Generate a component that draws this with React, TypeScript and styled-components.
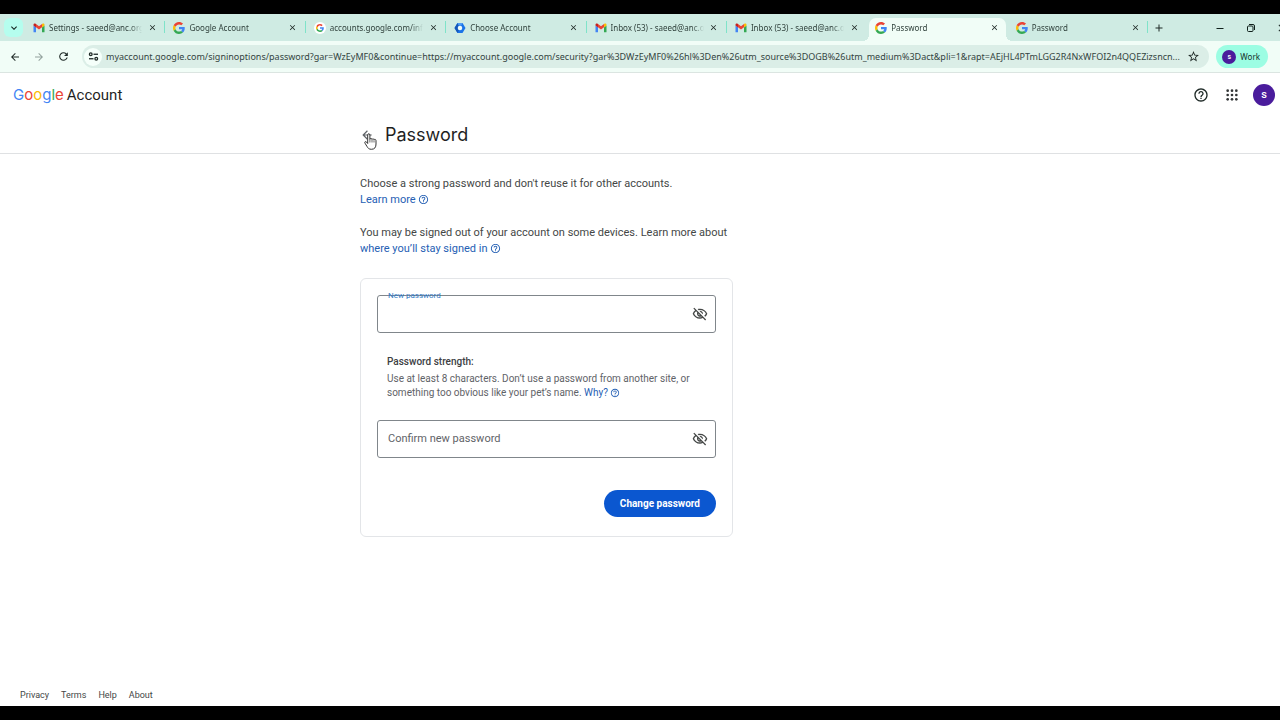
import React from "react";
import styled, { createGlobalStyle, css } from "styled-components";
import {
  MdAdd,
  MdArrowBack,
  MdArrowForward,
  MdClose,
  MdHelpOutline,
  MdKeyboardArrowDown,
  MdOutlineVisibilityOff,
  MdRefresh,
  MdStarBorder,
} from "react-icons/md";

const GlobalStyle = createGlobalStyle`
  *, *::before, *::after { box-sizing: border-box; }
  body {
    margin: 0;
    background: #000;
    font-family: Roboto, "Liberation Sans", sans-serif;
    color: #1f1f1f;
  }
  h1, h2, p { margin: 0; padding: 0; }
  button, input { font: inherit; color: inherit; }
`;

const Screen = styled.div`
  display: flex;
  flex-direction: column;
  min-height: 100vh;
  padding: 14px 0;
  overflow: hidden;
`;

const IconButton = styled.button<{ $size: number; $color?: string }>`
  display: flex;
  flex: none;
  align-items: center;
  justify-content: center;
  width: ${(p) => p.$size}px;
  height: ${(p) => p.$size}px;
  padding: 0;
  border: 0;
  border-radius: 50%;
  background: none;
  color: ${(p) => p.$color ?? "#1f2a27"};
  cursor: pointer;
`;

/* Browser tab strip */

const TabStrip = styled.header`
  display: flex;
  align-items: center;
  height: 27px;
  padding-left: 4px;
  overflow: hidden;
  background: #cfebe3;
  font-family: "Noto Sans", "Open Sans", sans-serif;
`;

const TabSearch = styled.button`
  display: flex;
  flex: none;
  align-items: center;
  justify-content: center;
  width: 19px;
  height: 19px;
  padding: 0;
  border: 0;
  border-radius: 6px;
  background: #b5fdee;
  color: #10201c;
`;

const TabList = styled.div`
  display: flex;
  flex: 0 1 1125px;
  align-self: stretch;
  min-width: 0;
  margin-right: 1px;
  padding: 4px 0 0 2px;
`;

const activeTab = css`
  background: #f1fdf7;
  &::before,
  &::after {
    content: "";
    position: absolute;
    bottom: 0;
    width: 6px;
    height: 6px;
  }
  &::before {
    right: 100%;
    background: radial-gradient(circle at 0 0, transparent 6px, #f1fdf7 6px);
  }
  &::after {
    left: 100%;
    background: radial-gradient(circle at 100% 0, transparent 6px, #f1fdf7 6px);
  }
`;

const TabSlot = styled.div<{ $divider: boolean }>`
  display: flex;
  flex: 1 1 0;
  min-width: 0;
  padding: 0 1px 0 2px;
  border-right: 1px solid transparent;
  border-image: ${(p) =>
    p.$divider
      ? "linear-gradient(transparent 4px, #7fe3c9 4px, #7fe3c9 15px, transparent 15px) 1"
      : "none"};
`;

const Tab = styled.div<{ $active: boolean }>`
  position: relative;
  display: flex;
  flex: 1;
  align-items: center;
  gap: 4px;
  min-width: 0;
  padding: 0 5px 4px 6px;
  border-radius: 7px 7px 0 0;
  ${(p) => p.$active && activeTab}
`;

const TabTitle = styled.span`
  flex: 1;
  min-width: 0;
  overflow: hidden;
  white-space: nowrap;
  font-size: 8px;
  line-height: 12px;
  color: #2f403b;
  mask-image: linear-gradient(to right, #000 calc(100% - 12px), transparent);
`;

const WindowControls = styled.div`
  display: flex;
  flex: none;
  gap: 15px;
  margin: 0 -10px 0 auto;
`;

/* Browser toolbar */

const Toolbar = styled.div`
  display: flex;
  align-items: center;
  height: 32px;
  padding: 0 12px 0 7px;
  border-bottom: 1px solid #dbe5e1;
  background: #f1fdf7;
  font-family: "Noto Sans", "Open Sans", sans-serif;
`;

const NavButtons = styled.nav`
  display: flex;
  gap: 8px;
  margin-right: 11px;
`;

const AddressBar = styled.div`
  display: flex;
  flex: 1;
  align-items: center;
  gap: 4px;
  min-width: 0;
  height: 23px;
  margin-right: 7px;
  padding: 0 7px 0 2px;
  border-radius: 12px;
  background: #dbeee7;
`;

const SiteInfo = styled(IconButton)`
  background: #f5fffa;
`;

const UrlInput = styled.input`
  flex: 1;
  min-width: 0;
  padding: 0;
  border: 0;
  outline: 0;
  background: none;
  font-size: 9px;
  line-height: 16px;
  color: #33443f;
  text-overflow: ellipsis;
`;

const ProfileChip = styled.button`
  display: flex;
  align-items: center;
  gap: 4px;
  height: 23px;
  padding: 0 8px 0 6px;
  border: 0;
  border-radius: 12px;
  background: #9cfde3;
  font-size: 8px;
  color: #14312a;
`;

const Avatar = styled.span<{ $size: number }>`
  display: flex;
  align-items: center;
  justify-content: center;
  width: ${(p) => p.$size}px;
  height: ${(p) => p.$size}px;
  border-radius: 50%;
  background: #4a1c9c;
  color: #fff;
  font-family: Roboto, sans-serif;
  font-size: ${(p) => (p.$size > 16 ? 11 : 7)}px;
  font-weight: 500;
`;

/* Account page */

const Page = styled.div`
  display: flex;
  flex: 1;
  flex-direction: column;
  background: #fff;
`;

const AccountBar = styled.header`
  display: flex;
  align-items: center;
  justify-content: space-between;
  height: 43px;
  padding: 0 5px 0 13px;
`;

const Brand = styled.a`
  display: flex;
  gap: 3px;
  font-size: 15px;
  line-height: 20px;
  color: #1f1f1f;
  text-decoration: none;
`;

const BrandName = styled.span`
  font-family: Inter, sans-serif;
`;

const BrandLetter = styled.span<{ $color: string }>`
  color: ${(p) => p.$color};
`;

const BarActions = styled.div`
  display: flex;
  align-items: center;
  gap: 11px;
`;

const TitleBar = styled.div`
  display: flex;
  height: 38px;
  border-bottom: 1px solid #dfe1e3;
`;

const Column = styled.div`
  width: 100%;
  max-width: 560px;
  margin: 0 auto;
`;

const TitleRow = styled(Column)`
  display: flex;
  align-items: center;
  gap: 11px;
`;

const BackHolder = styled.div`
  position: relative;
`;

const Pointer = styled.svg`
  position: absolute;
  top: 5px;
  left: 4px;
  width: 13px;
  height: 17px;
`;

const Title = styled.h1`
  font-family: Inter, sans-serif;
  font-size: 18px;
  font-weight: 400;
  line-height: 24px;
`;

const Content = styled(Column)`
  flex: 1;
  padding-top: 22px;
`;

const Narrow = styled.div`
  max-width: 373px;
`;

const Paragraph = styled.p`
  margin-bottom: 17px;
  font-size: 11px;
  line-height: 16px;
  color: #444746;
`;

const HelpLink = styled.a`
  color: #2560b4;
  text-decoration: none;
  svg {
    margin-left: 2px;
    vertical-align: -2px;
  }
`;

const Card = styled.form`
  margin-top: 21px;
  padding: 16px 16px 19px;
  border: 1px solid #e3e5e8;
  border-radius: 6px;
`;

const Field = styled.div`
  position: relative;
  display: flex;
  align-items: center;
  height: 38px;
  padding: 0 5px 0 10px;
  border: 1px solid #80868b;
  border-radius: 3px;
`;

const FloatingLabel = styled.label`
  position: absolute;
  top: -5px;
  left: 10px;
  font-size: 8px;
  line-height: 10px;
  color: #2f78c4;
`;

const FieldInput = styled.input`
  flex: 1;
  min-width: 0;
  padding: 0;
  border: 0;
  outline: 0;
  background: none;
  font-size: 11px;
  line-height: 16px;
  &::placeholder {
    color: #5f6368;
    opacity: 1;
  }
`;

const Strength = styled.section`
  padding: 22px 10px 20px;
  font-size: 10px;
  line-height: 14px;
  color: #5f6368;
`;

const StrengthTitle = styled.h2`
  margin-bottom: 3px;
  font-size: 10px;
  font-weight: 500;
  line-height: 14px;
  color: #3c4043;
`;

const Actions = styled.div`
  display: flex;
  justify-content: flex-end;
  margin-top: 32px;
`;

const SubmitButton = styled.button`
  height: 27px;
  padding: 0 16px;
  border: 0;
  border-radius: 14px;
  background: #0b57d0;
  font-size: 10px;
  font-weight: 700;
  color: #fff;
`;

const Footer = styled.footer`
  display: flex;
  gap: 12px;
  padding: 0 20px 5px;
`;

const FooterLink = styled.a`
  font-size: 9px;
  line-height: 12px;
  color: #444746;
  text-decoration: none;
`;

const GoogleMark = () => (
  <svg width="12" height="12" viewBox="0 0 48 48" aria-hidden="true">
    <path fill="#EA4335" d="M24 9.5c3.54 0 6.71 1.22 9.21 3.6l6.85-6.85C35.9 2.38 30.47 0 24 0 14.62 0 6.51 5.38 2.56 13.22l7.98 6.19C12.43 13.72 17.74 9.5 24 9.5z" />
    <path fill="#4285F4" d="M46.98 24.55c0-1.57-.15-3.09-.38-4.55H24v9.02h12.94c-.58 2.96-2.26 5.48-4.78 7.18l7.73 6c4.51-4.18 7.09-10.36 7.09-17.65z" />
    <path fill="#FBBC05" d="M10.53 28.59c-.48-1.45-.76-2.99-.76-4.59s.27-3.14.76-4.59l-7.98-6.19C.92 16.46 0 20.12 0 24c0 3.88.92 7.54 2.56 10.78l7.97-6.19z" />
    <path fill="#34A853" d="M24 48c6.48 0 11.93-2.13 15.89-5.81l-7.73-6c-2.15 1.45-4.92 2.3-8.16 2.3-6.26 0-11.57-4.22-13.47-9.91l-7.98 6.19C6.51 42.62 14.62 48 24 48z" />
  </svg>
);

const BadgeDisc = styled.span`
  display: flex;
  align-items: center;
  justify-content: center;
  width: 12px;
  height: 12px;
  border-radius: 50%;
  background: #fff;
  svg {
    width: 8px;
    height: 8px;
  }
`;

const GmailMark = () => (
  <svg width="12" height="12" viewBox="0 0 24 24" aria-hidden="true">
    <path fill="#4285F4" d="M1.500 20.500H6v-10L1 6.800V20a.5.5 0 0 0 .5.5z" />
    <path fill="#34A853" d="M18 20.500h4.500a.5.5 0 0 0 .5-.5V6.800l-5 3.700z" />
    <path fill="#EA4335" d="M6 10.500V4.200l6 4.500 6-4.500v6.300L12 15z" />
    <path fill="#C5221F" d="M1 7.200V5.500C1 3.300 3.600 2.300 5.300 3.700L6 4.200v6.700z" />
    <path fill="#FBBC04" d="M18 4.200l.7-.5C20.400 2.300 23 3.300 23 5.500v1.700l-5 3.700z" />
  </svg>
);

const AdminMark = () => (
  <svg width="12" height="12" viewBox="0 0 24 24" aria-hidden="true">
    <path fill="#1a73e8" d="M7 2h10l6 10-6 10H7L1 12z" />
    <path fill="#1557b8" d="M7 2l-6 10 6 10 2.500-5L7 12l2.500-5z" />
    <path fill="#4c9bf5" d="M7 2h10l-2.500 5h-5z" />
    <circle cx="12" cy="12" r="4.500" fill="#eefaf6" />
  </svg>
);

const TuneMark = () => (
  <svg width="11" height="11" viewBox="0 0 22 22" fill="none" stroke="#1f2a27" strokeWidth="2.600" aria-hidden="true">
    <circle cx="5.500" cy="6.500" r="2.700" />
    <path d="M11 6.500h9" />
    <circle cx="16.500" cy="15.500" r="2.700" />
    <path d="M2 15.500h9" />
  </svg>
);

const RestoreMark = () => (
  <svg width="8" height="8" viewBox="0 0 8 8" fill="none" stroke="#10201c" aria-hidden="true">
    <rect x="0.500" y="2" width="5.500" height="5.500" rx="1" />
    <path d="M2 .5h4a1.500 1.500 0 0 1 1.500 1.500v4" />
  </svg>
);

const MinimiseMark = () => (
  <svg width="8" height="8" viewBox="0 0 8 8" stroke="#10201c" aria-hidden="true">
    <path d="M0.500 4.500h7" />
  </svg>
);

const AppsMark = () => (
  <svg width="16" height="16" viewBox="0 0 24 24" fill="#333637" aria-hidden="true">
    {[5.5, 12, 18.5].map((y) =>
      [5.5, 12, 18.5].map((x) => <circle key={`${x}-${y}`} cx={x} cy={y} r="2" />)
    )}
  </svg>
);

const HandPointer = () => (
  <Pointer viewBox="0 0 13 17" aria-hidden="true">
    <path
      fill="#fff"
      stroke="#333"
      strokeLinejoin="round"
      d="M3.700 10.500V2c0-1.700 2.200-1.700 2.200 0v4.300c.2-1.200 2-1.100 2.100.1.300-.9 1.900-.8 2 .4.400-.8 2-.6 2 .8v3.400c0 3.300-1.300 5.300-4.600 5.300-2.600 0-3.400-1.200-4.500-3L1 10.200c-.8-1.300.6-2.200 1.500-1.200z"
    />
    <path stroke="#444" strokeWidth=".8" d="M5.900 6.300V9.500M8 6.800v2.700M10 7.200v2.300" />
  </Pointer>
);

const icons = {
  gmail: <GmailMark />,
  google: <GoogleMark />,
  badge: (
    <BadgeDisc>
      <GoogleMark />
    </BadgeDisc>
  ),
  admin: <AdminMark />,
};

const tabs: { icon: keyof typeof icons; title: string; active?: boolean }[] = [
  { icon: "gmail", title: "Settings - saeed@anc.org" },
  { icon: "google", title: "Google Account" },
  { icon: "badge", title: "accounts.google.com/info" },
  { icon: "admin", title: "Choose Account" },
  { icon: "gmail", title: "Inbox (53) - saeed@anc.org" },
  { icon: "gmail", title: "Inbox (53) - saeed@anc.org" },
  { icon: "google", title: "Password", active: true },
  { icon: "google", title: "Password" },
];

const brandLetters = [
  ["G", "#4285f4"],
  ["o", "#ea4335"],
  ["o", "#fbbc05"],
  ["g", "#4285f4"],
  ["l", "#34a853"],
  ["e", "#ea4335"],
];

const url =
  "myaccount.google.com/signinoptions/password?gar=WzEyMF0&continue=https://myaccount.google.com/security?gar%3DWzEyMF0%26hl%3Den%26utm_source%3DOGB%26utm_medium%3Dact&pli=1&rapt=AEjHL4PTmLGG2R4NxWFOI2n4QQEZizsncn...";

export default function App() {
  return (
    <Screen>
      <GlobalStyle />
      <TabStrip>
        <TabSearch aria-label="Search tabs">
          <MdKeyboardArrowDown size={12} />
        </TabSearch>
        <TabList>
          {tabs.map((tab, i) => (
            <TabSlot key={i} $divider={!tab.active && !tabs[i + 1]?.active}>
              <Tab $active={!!tab.active}>
                {icons[tab.icon]}
                <TabTitle>{tab.title}</TabTitle>
                <IconButton $size={12} aria-label="Close tab">
                  <MdClose size={9} />
                </IconButton>
              </Tab>
            </TabSlot>
          ))}
        </TabList>
        <IconButton $size={20} aria-label="New tab">
          <MdAdd size={12} />
        </IconButton>
        <WindowControls>
          <IconButton $size={16} aria-label="Minimise">
            <MinimiseMark />
          </IconButton>
          <IconButton $size={16} aria-label="Restore">
            <RestoreMark />
          </IconButton>
          <IconButton $size={16} aria-label="Close window">
            <MdClose size={12} />
          </IconButton>
        </WindowControls>
      </TabStrip>

      <Toolbar>
        <NavButtons>
          <IconButton $size={16} aria-label="Back">
            <MdArrowBack size={12} />
          </IconButton>
          <IconButton $size={16} $color="#93a29d" aria-label="Forward">
            <MdArrowForward size={12} />
          </IconButton>
          <IconButton $size={16} aria-label="Reload">
            <MdRefresh size={13} />
          </IconButton>
        </NavButtons>
        <AddressBar>
          <SiteInfo $size={18} aria-label="Site information">
            <TuneMark />
          </SiteInfo>
          <UrlInput aria-label="Address" defaultValue={url} />
          <IconButton $size={18} aria-label="Bookmark this page">
            <MdStarBorder size={13} />
          </IconButton>
        </AddressBar>
        <ProfileChip>
          <Avatar $size={14}>s</Avatar>
          Work
        </ProfileChip>
      </Toolbar>

      <Page>
        <AccountBar>
          <Brand href="#home">
            <BrandName>
              {brandLetters.map(([letter, color], i) => (
                <BrandLetter key={i} $color={color}>
                  {letter}
                </BrandLetter>
              ))}
            </BrandName>
            <span>Account</span>
          </Brand>
          <BarActions>
            <IconButton $size={20} aria-label="Help">
              <MdHelpOutline size={16} />
            </IconButton>
            <IconButton $size={20} aria-label="Google apps">
              <AppsMark />
            </IconButton>
            <IconButton $size={22} aria-label="Account">
              <Avatar $size={22}>s</Avatar>
            </IconButton>
          </BarActions>
        </AccountBar>
        <TitleBar>
          <TitleRow>
            <BackHolder>
              <IconButton $size={14} $color="#5f6368" aria-label="Go back">
                <MdArrowBack size={14} />
              </IconButton>
              <HandPointer />
            </BackHolder>
            <Title>Password</Title>
          </TitleRow>
        </TitleBar>

        <Content as="main">
          <Narrow>
            <Paragraph>
              Choose a strong password and don't reuse it for other accounts.
              <br />
              <HelpLink href="#strong">
                Learn more
                <MdHelpOutline size={11} />
              </HelpLink>
            </Paragraph>
            <Paragraph>
              You may be signed out of your account on some devices. Learn more about
              <br />
              <HelpLink href="#signed-in">
                where you’ll stay signed in
                <MdHelpOutline size={11} />
              </HelpLink>
            </Paragraph>

            <Card>
              <Field>
                <FloatingLabel htmlFor="new-password">New password</FloatingLabel>
                <FieldInput id="new-password" type="password" />
                <IconButton type="button" $size={20} $color="#444746" aria-label="Show password">
                  <MdOutlineVisibilityOff size={16} />
                </IconButton>
              </Field>
              <Strength>
                <StrengthTitle>Password strength:</StrengthTitle>
                <p>
                  Use at least 8 characters. Don’t use a password from another site, or
                  something too obvious like your pet’s name.{" "}
                  <HelpLink href="#why">
                    Why?
                    <MdHelpOutline size={10} />
                  </HelpLink>
                </p>
              </Strength>
              <Field>
                <FieldInput
                  type="password"
                  placeholder="Confirm new password"
                  aria-label="Confirm new password"
                />
                <IconButton type="button" $size={20} $color="#444746" aria-label="Show password">
                  <MdOutlineVisibilityOff size={16} />
                </IconButton>
              </Field>
              <Actions>
                <SubmitButton type="submit">Change password</SubmitButton>
              </Actions>
            </Card>
          </Narrow>
        </Content>

        <Footer>
          <FooterLink href="#privacy">Privacy</FooterLink>
          <FooterLink href="#terms">Terms</FooterLink>
          <FooterLink href="#help">Help</FooterLink>
          <FooterLink href="#about">About</FooterLink>
        </Footer>
      </Page>
    </Screen>
  );
}
